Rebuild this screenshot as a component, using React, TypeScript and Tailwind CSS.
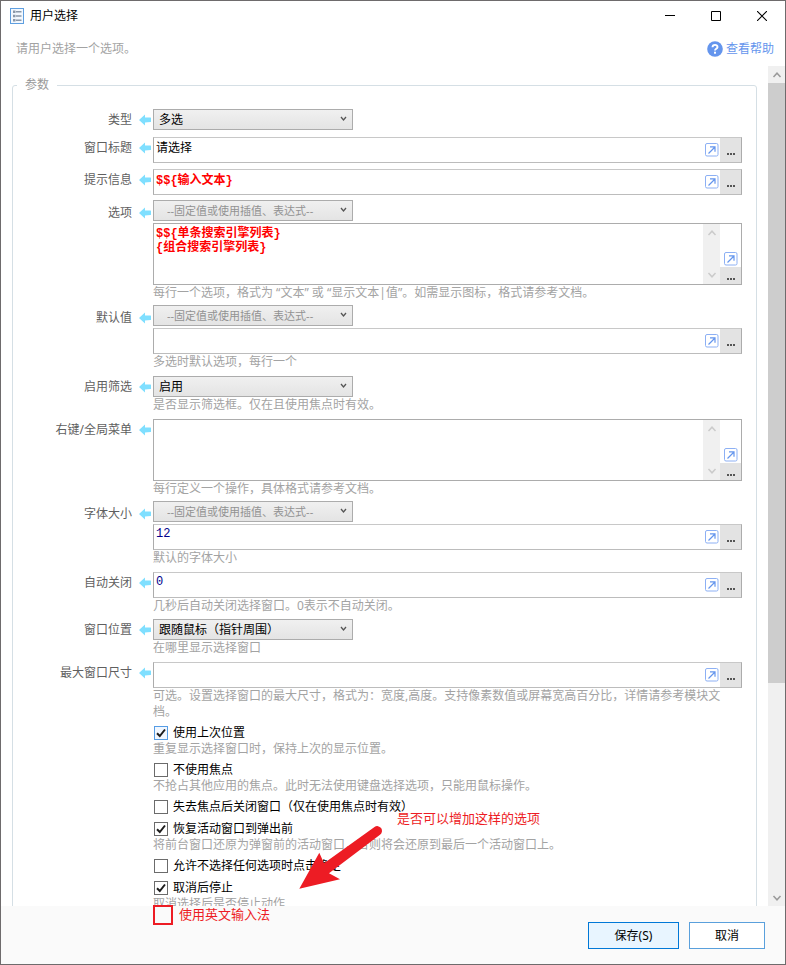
import { useId, type ReactNode } from "react";

const UI = "font-['Noto_Sans','Noto_Sans_CJK_SC',sans-serif]";
const CODE = "font-['Liberation_Mono','Noto_Sans_CJK_SC',monospace]";

const tones = {
  plain: "text-black",
  expression: "font-bold text-[#ff0000]",
  number: "text-[#00008b]",
};
type Tone = keyof typeof tones;

function ArrowLeft() {
  return (
    <svg className="ml-[7px] mr-0.5 w-3 shrink-0" height="12" viewBox="0 0 12 12" aria-hidden="true">
      <path d="M0 6 6 .5V3.500h5.500q.5 0 .5.5v3.500q0 .5-.5.5L6 8.500v3z" fill="#7fdfff" />
    </svg>
  );
}

function Chevron({ up, className }: { up?: boolean; className?: string }) {
  return (
    <svg className={className} width="10" height="8" viewBox="0 0 10 8" fill="none" stroke="currentColor" strokeWidth="1.5" aria-hidden="true">
      <path d={up ? "M1.5 6 5 2.2 8.5 6" : "M1.5 2 5 5.8 8.5 2"} />
    </svg>
  );
}

function ExpandButton({ name }: { name: string }) {
  return (
    <button type="button" aria-label={`${name} 展开`} className="shrink-0">
      <svg width="14" height="14" viewBox="0 0 14 14" fill="none" aria-hidden="true">
        <rect x=".5" y=".5" width="12.5" height="12.5" rx="1.5" fill="#fff" stroke="#8db0f4" />
        <path d="M3.5 10.5 9.5 4.5M5 3.800h5v5" stroke="#6495ed" strokeWidth="1.2" />
      </svg>
    </button>
  );
}

function Row({ label, htmlFor, gap, stacked, children }: { label: string; htmlFor: string; gap: string; stacked?: boolean; children: ReactNode }) {
  return (
    <div className={`flex items-start ${gap}`}>
      <div className={`flex shrink-0 items-center ${stacked ? "h-[25px]" : "h-[22px]"}`}>
        <label htmlFor={htmlFor} className="w-[119px] text-right text-[#5f5f5f]">{label}</label>
        <ArrowLeft />
      </div>
      <div className="min-w-0 flex-1">{children}</div>
    </div>
  );
}

function Select({ id, value, muted, label }: { id?: string; value: string; muted?: boolean; label?: string }) {
  return (
    <div className="relative w-[200px]">
      <select
        id={id}
        aria-label={label}
        className={`block h-[21px] w-full appearance-none rounded-none border border-[#acacac] bg-linear-to-b from-[#f0f0f0] to-[#e4e4e4] leading-4 outline-none ${
          muted ? "pl-[13px] text-[11px] text-[#929292]" : "pl-[5px] text-xs text-black"
        }`}
      >
        <option>{value}</option>
      </select>
      <svg className="pointer-events-none absolute top-[7px] right-[6px]" width="7" height="6" viewBox="0 0 7 6" fill="none" stroke="#555" strokeWidth="1.3" aria-hidden="true">
        <path d="M1 1 3.5 4 6 1" />
      </svg>
    </div>
  );
}

function MoreButton({ name, className }: { name: string; className: string }) {
  return (
    <button type="button" aria-label={`${name} 更多`} className={`flex w-[21px] shrink-0 items-end justify-center gap-px bg-[#e3e3e3] ${className}`}>
      <span className="size-[2px] bg-[#555]" />
      <span className="size-[2px] bg-[#555]" />
      <span className="size-[2px] bg-[#555]" />
    </button>
  );
}

function Field({ id, name, value = "", tone = "plain" }: { id: string; name: string; value?: string; tone?: Tone }) {
  return (
    <div className="flex h-[26px] border border-t-[#c8c8c8] border-r-[#acacac] border-b-[#bcbcbc] border-l-[#acacac] bg-white">
      <input id={id} aria-label={name} defaultValue={value} className={`h-[18px] min-w-0 flex-1 pl-0.5 text-xs leading-4 outline-none ${CODE} ${tones[tone]}`} />
      <div className="flex items-center px-px">
        <ExpandButton name={name} />
      </div>
      <MoreButton name={name} className="pb-[7px]" />
    </div>
  );
}

function MultiField({ id, name, value = "" }: { id: string; name: string; value?: string }) {
  return (
    <div className="flex h-[62px] border border-[#acacac] bg-white">
      <textarea id={id} aria-label={name} defaultValue={value} className={`h-full min-w-0 flex-1 resize-none overflow-hidden pt-[3px] pl-0.5 text-xs leading-[14px] outline-none ${CODE} ${tones.expression}`} />
      <div className="flex w-[17px] flex-col items-center justify-between bg-[#f0f0f0] py-[5px] text-[#cbcbcb]">
        <Chevron up />
        <Chevron />
      </div>
      <div className="flex w-[21px] flex-col items-center justify-end gap-px">
        <ExpandButton name={name} />
        <MoreButton name={name} className="h-[17px] pb-1" />
      </div>
    </div>
  );
}

function Hint({ children }: { children: ReactNode }) {
  return <p className="leading-4 text-[#a3a3a3]">{children}</p>;
}

function Check({ label, hint, checked, hot }: { label: string; hint?: string; checked?: boolean; hot?: boolean }) {
  const id = useId();
  return (
    <div className={hint ? "" : "pb-px"}>
      <div className="flex h-4 items-center gap-[5px] pl-px">
        <span className="relative size-[14px] shrink-0">
          <input
            id={id}
            type="checkbox"
            defaultChecked={checked}
            className={`peer block size-[14px] appearance-none border ${hot ? "border-[#569de5] bg-[#f1f7ff]" : "border-[#6b6b6b] bg-white"}`}
          />
          <svg className="pointer-events-none absolute inset-0 hidden peer-checked:block" width="14" height="14" viewBox="0 0 14 14" fill="none" stroke="#1c1c1c" strokeWidth="2" aria-hidden="true">
            <path d="M3 7.2 5.8 10 11 3.5" />
          </svg>
        </span>
        <label htmlFor={id} className="whitespace-nowrap text-black">{label}</label>
      </div>
      {hint && <Hint>{hint}</Hint>}
    </div>
  );
}

const EXPRESSION = "--固定值或使用插值、表达式--";

const checks = [
  { label: "使用上次位置", hint: "重复显示选择窗口时，保持上次的显示位置。", checked: true, hot: true },
  { label: "不使用焦点", hint: "不抢占其他应用的焦点。此时无法使用键盘选择选项，只能用鼠标操作。" },
  { label: "失去焦点后关闭窗口（仅在使用焦点时有效）" },
  { label: "恢复活动窗口到弹出前", hint: "将前台窗口还原为弹窗前的活动窗口，否则将会还原到最后一个活动窗口上。", checked: true },
  { label: "允许不选择任何选项时点击确定" },
  { label: "取消后停止", hint: "取消选择后是否停止动作", checked: true },
];

function TitleBar() {
  return (
    <header className="flex h-[30px] shrink-0 items-center pl-2">
      <svg width="16" height="17" viewBox="0 0 16 17" fill="none" aria-hidden="true">
        <rect x="1.5" y=".5" width="13" height="15" fill="#f3f8fe" stroke="#5f9fe0" />
        <path d="M4 2.500h2.500v2.500H4zM4 6.700h2.500v2.500H4zM4 10.900h2.500v2.500H4z" fill="#8a97a8" />
        <path d="M7 3.800h5.500M7 8h5.500M7 12.200h5.500" stroke="#8a97a8" strokeWidth="1.4" />
      </svg>
      <h1 className="ml-[5px] flex-1 text-black">用户选择</h1>
      <button type="button" aria-label="最小化" className="flex h-full w-[46px] items-center justify-center">
        <svg width="10" height="10" viewBox="0 0 10 10"><path d="M0 4.500h10" stroke="#000" /></svg>
      </button>
      <button type="button" aria-label="最大化" className="flex h-full w-[46px] items-center justify-center">
        <svg width="10" height="10" viewBox="0 0 10 10"><path d="M.5.5h9v9h-9z" fill="none" stroke="#000" /></svg>
      </button>
      <button type="button" aria-label="关闭" className="flex h-full w-[46px] items-center justify-center">
        <svg width="10" height="10" viewBox="0 0 10 10"><path d="m0 0 10 10M10 0 0 10" stroke="#000" strokeWidth="1.1" /></svg>
      </button>
    </header>
  );
}

function Annotations() {
  return (
    <div className="pointer-events-none absolute inset-0 text-[13px] leading-4 text-[#ed1c24]">
      <p className="absolute top-[809px] left-[396px]">是否可以增加这样的选项</p>
      <svg className="absolute top-[824px] left-[297px]" width="88" height="68" viewBox="298 825 88 68" fill="#ed1c24" aria-hidden="true">
        <path d="M299.3 888.7 319.3 852.7 324 863.3 374.5 827A4.7 4.7 0 0 1 380 834.700L329 873.3 340 879.3Z" />
      </svg>
      <div className="absolute top-[904px] left-[152px] size-5 border-2 border-[#ed1c24]" />
      <p className="absolute top-[905px] left-[178px]">使用英文输入法</p>
    </div>
  );
}

export default function App() {
  return (
    <div className={`relative flex h-screen flex-col overflow-hidden border border-[#6e6b6c] bg-white text-xs leading-4 ${UI}`}>
      <TitleBar />
      <div className="flex h-[35px] shrink-0 items-center justify-between pr-[11px] pl-[15px]">
        <p className="text-[#a3a3a3]">请用户选择一个选项。</p>
        <a href="#help" className="flex items-center gap-[3px] text-[#6495ed]">
          <svg width="16" height="16" viewBox="0 0 16 16" aria-hidden="true">
            <circle cx="8" cy="8" r="7.8" fill="#6495ed" />
            <path d="M5.5 6.3C5.5 3 10.7 3.1 10.5 6.1 10.4 7.8 8 7.8 8 9.6" fill="none" stroke="#fff" strokeWidth="1.9" />
            <rect x="7" y="10.7" width="2" height="2" fill="#fff" />
          </svg>
          查看帮助
        </a>
      </div>

      <div className="flex min-h-0 flex-1">
        <main className="min-w-0 flex-1 overflow-hidden px-[11px] pt-[11px]">
          <fieldset className="min-w-0 rounded-[3px] border border-[#d5dfe5] pt-4 pr-[14px] pb-6">
            <legend className="ml-[4px] px-2 text-[#999]">参数</legend>
            <Row label="类型" htmlFor="type" gap="">
              <Select id="type" value="多选" />
            </Row>
            <Row label="窗口标题" htmlFor="title" gap="mt-[6px]">
              <Field id="title" name="窗口标题" value="请选择" />
            </Row>
            <Row label="提示信息" htmlFor="prompt" gap="mt-[6px]">
              <Field id="prompt" name="提示信息" value="$${输入文本}" tone="expression" />
            </Row>
            <Row label="选项" htmlFor="options" gap="mt-[5px]" stacked>
              <Select value={EXPRESSION} label="选项 取值方式" muted />
              <div className="mt-0.5">
                <MultiField id="options" name="选项" value={"$${单条搜索引擎列表}\n{组合搜索引擎列表}"} />
              </div>
              <Hint>每行一个选项，格式为 “文本” 或 “显示文本|值”。如需显示图标，格式请参考文档。</Hint>
            </Row>
            <Row label="默认值" htmlFor="default" gap="mt-1" stacked>
              <Select value={EXPRESSION} label="默认值 取值方式" muted />
              <div className="mt-0.5">
                <Field id="default" name="默认值" />
              </div>
              <Hint>多选时默认选项，每行一个</Hint>
            </Row>
            <Row label="启用筛选" htmlFor="filter" gap="mt-[6px]">
              <Select id="filter" value="启用" />
              <Hint>是否显示筛选框。仅在且使用焦点时有效。</Hint>
            </Row>
            <Row label="右键/全局菜单" htmlFor="menu" gap="mt-[6px]">
              <MultiField id="menu" name="右键/全局菜单" />
              <Hint>每行定义一个操作，具体格式请参考文档。</Hint>
            </Row>
            <Row label="字体大小" htmlFor="size" gap="mt-1" stacked>
              <Select value={EXPRESSION} label="字体大小 取值方式" muted />
              <div className="mt-0.5">
                <Field id="size" name="字体大小" value="12" tone="number" />
              </div>
              <Hint>默认的字体大小</Hint>
            </Row>
            <Row label="自动关闭" htmlFor="close" gap="mt-[6px]">
              <Field id="close" name="自动关闭" value="0" tone="number" />
              <Hint>几秒后自动关闭选择窗口。0表示不自动关闭。</Hint>
            </Row>
            <Row label="窗口位置" htmlFor="position" gap="mt-[5px]">
              <Select id="position" value="跟随鼠标（指针周围）" />
              <Hint>在哪里显示选择窗口</Hint>
            </Row>
            <Row label="最大窗口尺寸" htmlFor="max" gap="mt-[6px]">
              <Field id="max" name="最大窗口尺寸" />
              <Hint>可选。设置选择窗口的最大尺寸，格式为：宽度,高度。支持像素数值或屏幕宽高百分比，详情请参考模块文档。</Hint>
            </Row>
            <div className="mt-[5px] flex flex-col gap-[5px] pl-[140px]">
              {checks.map((c) => (
                <Check key={c.label} {...c} />
              ))}
            </div>
          </fieldset>
        </main>
        <div className="flex w-[17px] shrink-0 flex-col bg-[#f0f0f0] text-[#9a9a9a]">
          <button type="button" aria-label="向上滚动" className="flex h-[17px] items-center justify-center">
            <Chevron up />
          </button>
          <div className="min-h-0 flex-1">
            <div className="h-[74.5%] bg-[#cdcdcd]" />
          </div>
          <button type="button" aria-label="向下滚动" className="flex h-[17px] items-center justify-center">
            <Chevron />
          </button>
        </div>
      </div>

      <footer className="flex h-[58px] shrink-0 items-start justify-end gap-[10px] bg-[#fafafa] pt-4 pr-5">
        <button type="button" className="h-[27px] w-[91px] border border-[#0078d7] bg-[#e8f5ff] text-black">保存(S)</button>
        <button type="button" className="h-[27px] w-[76px] border border-[#5aa0dc] bg-white text-black">取消</button>
      </footer>
      <Annotations />
    </div>
  );
}
